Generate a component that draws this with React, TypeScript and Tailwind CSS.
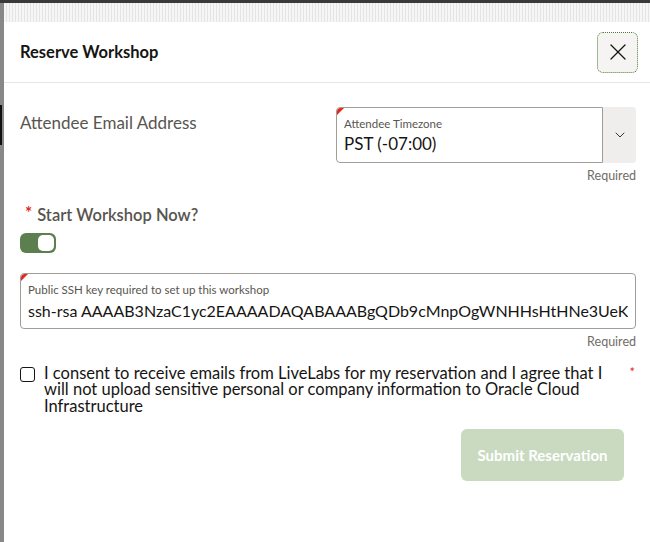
import { X, ChevronDown } from 'lucide-react';

const font = { fontFamily: 'Lato, "Noto Sans", "Liberation Sans", sans-serif' };

function Corner() {
  return (
    <span className="absolute left-0 top-0 h-0 w-0 border-r-[7px] border-t-[7px] border-r-transparent border-t-[#e0291c] rounded-tl-[4px]" />
  );
}

export default function App() {
  return (
    <div className="flex h-[542px] w-[650px] flex-col overflow-hidden bg-[#888]" style={font}>
      <div className="h-[3px] w-full shrink-0 bg-[#3a3a3a]" />
      <div className="flex min-h-0 flex-1">
        <div className="flex w-[4px] shrink-0 flex-col bg-[#888]">
          <div className="mt-[102px] h-[40px] w-[2px] bg-[#111]" />
        </div>
        <div className="flex min-w-0 flex-1 flex-col overflow-hidden bg-white">
          <div className="h-[19px] shrink-0 bg-[repeating-linear-gradient(90deg,#f6f6f6_0px,#f6f6f6_2px,#e4e4e4_2px,#e4e4e4_3px)]" />
          {/* Header */}
          <div className="flex h-[61px] shrink-0 items-center justify-between border-b border-[#e6e6e6] pl-4 pr-3">
            <h2 className="text-[16.5px] font-bold text-[#161513]">Reserve Workshop</h2>
            <button
              type="button"
              className="flex h-[41px] w-[41px] items-center justify-center rounded-[6px] border border-dotted border-[#4f7d3a] bg-[#f5f4f2] text-[#161513]"
              aria-label="Close"
            >
              <X size={28} strokeWidth={1.1} />
            </button>
          </div>

          {/* Body */}
          <div className="flex min-w-0 flex-col pl-4 pr-[14px] pt-[24px]">
            <div className="flex justify-between">
              <div className="pt-[3px] text-[17px] text-[#58554f]">Attendee Email Address</div>
              <div className="flex w-[300px] flex-col">
                <div className="flex h-[56px]">
                  <div className="relative flex flex-1 flex-col rounded-l-[4px] border border-[#a09d98] px-[7px] pt-[9px]">
                    <Corner />
                    <span className="text-[11.5px] leading-[14px] text-[#58554f]">Attendee Timezone</span>
                    <span className="mt-[1px] text-[17px] leading-[24px] text-[#161513]">PST (-07:00)</span>
                  </div>
                  <div className="flex w-[33px] items-center justify-center rounded-r-[4px] bg-[#efeeec] text-[#3a3632]">
                    <ChevronDown size={16} strokeWidth={1.5} />
                  </div>
                </div>
                <div className="mt-[4px] text-right text-[12.5px] text-[#6f6c68]">Required</div>
              </div>
            </div>

            <div className="mt-[19px] flex items-start text-[16.5px] text-[#58554f]">
              <span className="ml-[5px] mr-[5px] text-[17px] font-bold leading-[16px] text-[#e0291c]">*</span>
              <span className="font-semibold leading-[20px]">Start Workshop Now?</span>
            </div>
            <div className="mt-[8px] flex h-[20px] w-[36px] items-center justify-end rounded-[6px] bg-[#5b7f4f] pr-[2px]">
              <div className="h-[16px] w-[16px] rounded-[5px] bg-white" />
            </div>

            <div className="relative mt-[20px] flex h-[56px] min-w-0 flex-col overflow-hidden rounded-[4px] border border-[#a09d98] px-[7px] pt-[9px]">
              <Corner />
              <span className="text-[11.5px] leading-[14px] text-[#58554f]">
                Public SSH key required to set up this workshop
              </span>
              <span className="mt-[3px] overflow-hidden whitespace-nowrap text-[16px] leading-[22px] text-[#161513]">
                ssh-rsa AAAAB3NzaC1yc2EAAAADAQABAAABgQDb9cMnpOgWNHHsHtHNe3UeK+Lx9Qv
              </span>
            </div>
            <div className="mt-[4px] text-right text-[12.5px] text-[#6f6c68]">Required</div>

            <div className="mt-[13px] flex items-start">
              <div className="mt-[2px] h-[15px] w-[15px] shrink-0 rounded-[3px] border border-[#161513]" />
              <p className="ml-[9px] w-[562px] text-[16.5px] leading-[16.5px] text-[#161513]">
                I consent to receive emails from LiveLabs for my reservation and I agree that I will not upload
                sensitive personal or company information to Oracle Cloud Infrastructure
              </p>
              <span className="ml-auto mr-[1px] text-[13px] leading-[14px] text-[#e0291c]">*</span>
            </div>

            <div className="mt-[15px] flex justify-end pr-[12px]">
              <button
                type="button"
                disabled
                className="h-[52px] w-[163px] rounded-[6px] bg-[#c9dac0] text-[15px] font-bold text-white"
              >
                Submit Reservation
              </button>
            </div>
          </div>
        </div>
      </div>
    </div>
  );
}
